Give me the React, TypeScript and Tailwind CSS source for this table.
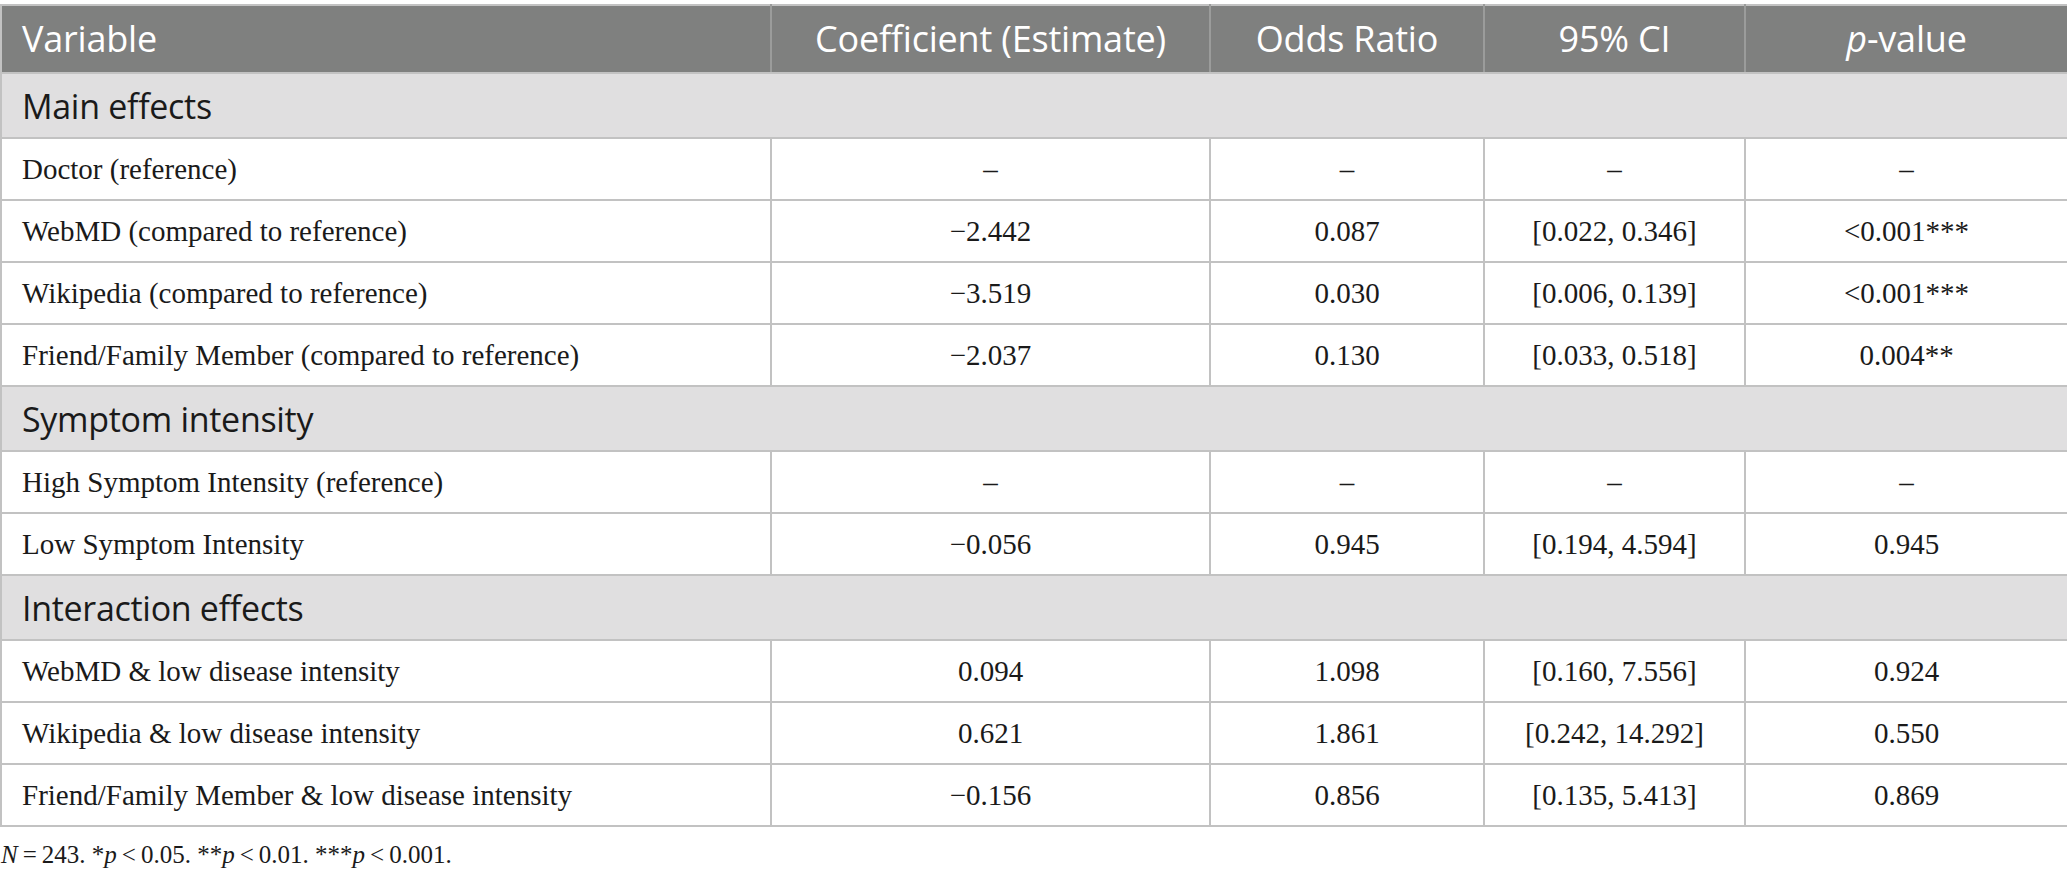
const rows: { type: "section" | "data"; cells: string[] }[] = [
  { type: "section", cells: ["Main effects"] },
  { type: "data", cells: ["Doctor (reference)", "–", "–", "–", "–"] },
  { type: "data", cells: ["WebMD (compared to reference)", "−2.442", "0.087", "[0.022, 0.346]", "<0.001***"] },
  { type: "data", cells: ["Wikipedia (compared to reference)", "−3.519", "0.030", "[0.006, 0.139]", "<0.001***"] },
  { type: "data", cells: ["Friend/Family Member (compared to reference)", "−2.037", "0.130", "[0.033, 0.518]", "0.004**"] },
  { type: "section", cells: ["Symptom intensity"] },
  { type: "data", cells: ["High Symptom Intensity (reference)", "–", "–", "–", "–"] },
  { type: "data", cells: ["Low Symptom Intensity", "−0.056", "0.945", "[0.194, 4.594]", "0.945"] },
  { type: "section", cells: ["Interaction effects"] },
  { type: "data", cells: ["WebMD & low disease intensity", "0.094", "1.098", "[0.160, 7.556]", "0.924"] },
  { type: "data", cells: ["Wikipedia & low disease intensity", "0.621", "1.861", "[0.242, 14.292]", "0.550"] },
  { type: "data", cells: ["Friend/Family Member & low disease intensity", "−0.156", "0.856", "[0.135, 5.413]", "0.869"] },
];

const sans = "font-['Open_Sans','Noto_Sans',sans-serif]";
const serif = "font-['Liberation_Serif','Times_New_Roman',serif]";

export default function App() {
  return (
    <div className="w-[2067px] h-[878px] bg-white pt-[4px]">
      <table className="w-[2067px] table-fixed border-collapse">
        <colgroup>
          <col className="w-[770px]" />
          <col className="w-[439px]" />
          <col className="w-[274px]" />
          <col className="w-[261px]" />
          <col className="w-[323px]" />
        </colgroup>
        <thead>
          <tr className={`h-[68px] bg-[#7f807f] text-white text-[36px] leading-none ${sans} tracking-[-0.2px]`}>
            <th className="border-2 border-[#c2c2c2] border-r-[#9b9c9b] px-[20px] text-left font-normal">Variable</th>
            <th className="border-2 border-[#c2c2c2] border-x-[#9b9c9b] text-center font-normal">Coefficient (Estimate)</th>
            <th className="border-2 border-[#c2c2c2] border-x-[#9b9c9b] text-center font-normal">Odds Ratio</th>
            <th className="border-2 border-[#c2c2c2] border-x-[#9b9c9b] text-center font-normal">95% CI</th>
            <th className="border-2 border-[#c2c2c2] border-l-[#9b9c9b] text-center font-normal">
              <span className="italic">p</span>-value
            </th>
          </tr>
        </thead>
        <tbody>
          {rows.map((r, i) =>
            r.type === "section" ? (
              <tr key={i} className="h-[65px] bg-[#e0dfe0]">
                <td colSpan={5} className={`border-2 border-[#c2c2c2] px-[20px] text-[34px] leading-none text-[#1a1a1a] ${sans} tracking-[-0.3px]`}>
                  {r.cells[0]}
                </td>
              </tr>
            ) : (
              <tr key={i} className={`h-[62px] text-[29px] leading-none text-[#1a1a1a] ${serif}`}>
                {r.cells.map((c, j) => (
                  <td
                    key={j}
                    className={
                      j === 0
                        ? "border-2 border-[#c2c2c2] px-[20px] text-left"
                        : "border-2 border-[#c2c2c2] text-center"
                    }
                  >
                    {c}
                  </td>
                ))}
              </tr>
            )
          )}
        </tbody>
      </table>
      <p className={`mt-[9px] pl-[1px] text-[25px] text-[#1a1a1a] ${serif}`}>
        <span className="italic">N</span>{"\u2009=\u2009"}243. *<span className="italic">p</span>{"\u2009<\u2009"}0.05. **
        <span className="italic">p</span>{"\u2009<\u2009"}0.01. ***<span className="italic">p</span>{"\u2009<\u2009"}0.001.
      </p>
    </div>
  );
}
